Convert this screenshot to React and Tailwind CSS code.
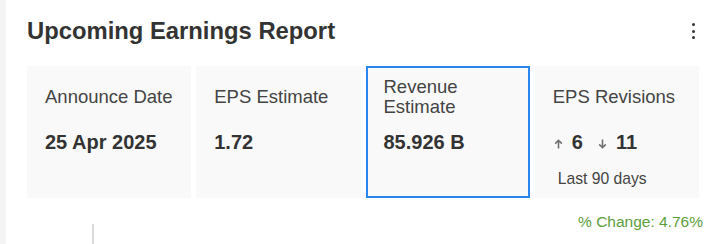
import React from 'react'

const cards = [
  { label: 'Announce Date', value: '25 Apr 2025' },
  { label: 'EPS Estimate', value: '1.72' },
  { label: 'Revenue Estimate', value: '85.926 B', active: true },
]

function ArrowUp() {
  return (
    <svg width="9" height="10" viewBox="0 0 9 10" className="text-[#707070]">
      <path d="M4.5 9.5V1.3M1.2 4.6L4.5 1.3L7.8 4.6" fill="none" stroke="currentColor" strokeWidth="1.6" />
    </svg>
  )
}

function ArrowDown() {
  return (
    <svg width="9" height="10" viewBox="0 0 9 10" className="text-[#707070]">
      <path d="M4.5 0.5V8.7M1.2 5.4L4.5 8.7L7.8 5.4" fill="none" stroke="currentColor" strokeWidth="1.6" />
    </svg>
  )
}

function Card({ label, value, active, children }) {
  return (
    <div
      className={
        active
          ? 'h-[132px] border-2 border-[#2a86ee] bg-[#f9f9f9] pl-[16px] pr-2 pt-[9px]'
          : 'h-[132px] border-2 border-transparent bg-[#f9f9f9] pl-[16px] pr-2 pt-[9px]'
      }
    >
      <div className="flex h-[40px] items-center text-[18.5px] leading-[20px] text-[#444]">
        <span>{label}</span>
      </div>
      <div className="mt-[13px] text-[20px] font-bold leading-[24px] text-[#333]">{value}</div>
      {children}
    </div>
  )
}

export default function App() {
  return (
    <div className="flex h-[244px] w-[707px] overflow-hidden bg-white font-['Liberation_Sans',Arial,sans-serif]">
      <div className="w-[6px] shrink-0 bg-[#f4f4f4]" />
      <div className="flex-1 pl-[21px] pr-[8px] pt-[17px]">
        <div className="flex h-[28px] items-center justify-between">
          <h2 className="text-[23.8px] font-bold leading-[28px] text-[#333]">Upcoming Earnings Report</h2>
          <div className="mr-[4px] flex flex-col items-center gap-[3.5px]">
            <span className="h-[3px] w-[3px] rounded-full bg-[#333]" />
            <span className="h-[3px] w-[3px] rounded-full bg-[#333]" />
            <span className="h-[3px] w-[3px] rounded-full bg-[#333]" />
          </div>
        </div>

        <div className="mt-[21px] grid grid-cols-4 gap-[5px]">
          {cards.map((c) => (
            <Card key={c.label} {...c} />
          ))}
          <div className="h-[132px] border-2 border-transparent bg-[#f9f9f9] pl-[16px] pr-2 pt-[9px]">
            <div className="flex h-[40px] items-center text-[18.5px] leading-[20px] text-[#444]">EPS Revisions</div>
            <div className="mt-[13px] flex h-[24px] items-center text-[20px] font-bold leading-[24px] text-[#333]">
              <span className="ml-[1px] mr-[9px] mt-[3px]"><ArrowUp /></span>
              <span>6</span>
              <span className="ml-[15px] mr-[9px] mt-[3px]"><ArrowDown /></span>
              <span>11</span>
            </div>
            <div className="ml-[5px] mt-[15px] text-[15.7px] leading-[20px] text-[#444]">Last 90 days</div>
          </div>
        </div>

        <div className="flex items-start">
          <div className="ml-[65px] mt-[26px] h-[24px] w-[2px] bg-[#dadada]" />
          <div className="ml-auto mr-[-4px] mt-[15px] text-[15.5px] leading-[18px] text-[#5c9e3b]">% Change: 4.76%</div>
        </div>
      </div>
    </div>
  )
}
